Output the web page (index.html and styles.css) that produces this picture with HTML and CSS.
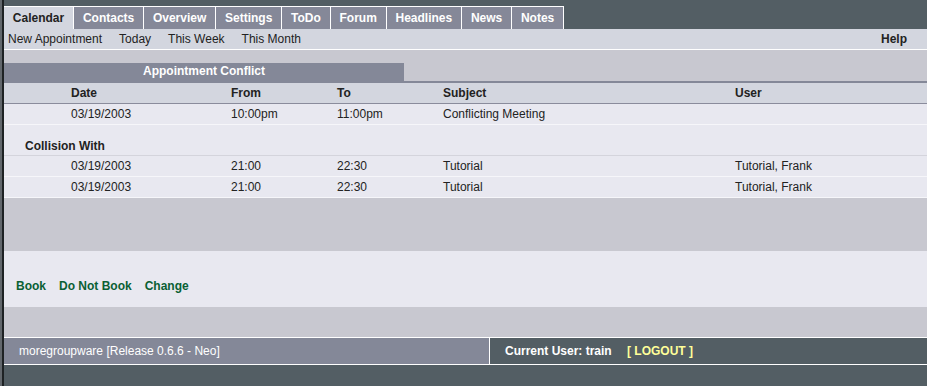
FILE: index.html
```html
<!DOCTYPE html>
<html lang="en">
<head>
  <meta charset="UTF-8" />
  <title>moregroupware - Calendar</title>
  <link rel="stylesheet" href="styles.css">
</head>
<body>
<div class="frame">
  <ul class="tabs">
    <li class="tab active">Calendar</li>
    <li class="tab">Contacts</li>
    <li class="tab">Overview</li>
    <li class="tab">Settings</li>
    <li class="tab">ToDo</li>
    <li class="tab">Forum</li>
    <li class="tab">Headlines</li>
    <li class="tab">News</li>
    <li class="tab">Notes</li>
  </ul>

  <div class="subnav">
    <div class="subnav-links">
      <a href="#">New Appointment</a>
      <a href="#">Today</a>
      <a href="#">This Week</a>
      <a href="#">This Month</a>
    </div>
    <a href="#" class="help">Help</a>
  </div>

  <div class="main">
    <div class="panel-head">
      <div class="panel-title">Appointment Conflict</div>
    </div>

    <div class="row head">
      <span></span><span>Date</span><span>From</span><span>To</span><span>Subject</span><span>User</span>
    </div>
    <div class="row">
      <span></span><span>03/19/2003</span><span>10:00pm</span><span>11:00pm</span><span>Conflicting Meeting</span><span></span>
    </div>

    <div class="collision">Collision With</div>
    <div class="row">
      <span></span><span>03/19/2003</span><span>21:00</span><span>22:30</span><span>Tutorial</span><span>Tutorial, Frank</span>
    </div>
    <div class="row">
      <span></span><span>03/19/2003</span><span>21:00</span><span>22:30</span><span>Tutorial</span><span>Tutorial, Frank</span>
    </div>

    <div class="gap-big"></div>
    <div class="actions">
      <a href="#">Book</a>
      <a href="#">Do Not Book</a>
      <a href="#">Change</a>
    </div>
    <div class="gap-small"></div>
  </div>

  <div class="footer">
    <div class="release">moregroupware [Release 0.6.6 - Neo]</div>
    <div class="user">Current User: train <a href="#" class="logout">[ LOGOUT ]</a></div>
  </div>
</div>
</body>
</html>
```

FILE: styles.css
```css
body {
  margin: 0;
  background: #535e64;
  font-family: "Liberation Sans", Arial, sans-serif;
  font-size: 12px;
  color: #222;
  border-left: 2px solid #62676c;
  min-height: 386px;
  box-sizing: border-box;
}
a {
  color: inherit;
  text-decoration: none;
}
.frame {
  border-left: 2px solid #1e2224;
  min-height: 386px;
}
.tabs {
  display: flex;
  list-style: none;
  margin: 0;
  padding: 6px 0 0 0;
}
.tab {
  height: 22px;
  line-height: 22px;
  padding: 0 8.85px;
  background: #858898;
  color: #fff;
  font-weight: bold;
  border-top: 1px solid #fff;
  border-right: 1px solid #fff;
}
.tab.active {
  background: #d3d6df;
  color: #222;
}
.subnav {
  display: flex;
  justify-content: space-between;
  height: 20px;
  line-height: 20px;
  background: #d3d6df;
  border-bottom: 1px solid #fff;
  padding: 0 20px 0 4px;
}
.subnav-links {
  display: flex;
  gap: 17px;
}
.help {
  font-weight: bold;
}
.main {
  background: #c8c8d0;
  padding-top: 13px;
}
.panel-head {
  border-bottom: 2px solid #848898;
}
.panel-title {
  width: 400px;
  height: 18px;
  line-height: 17px;
  background: #848898;
  color: #fff;
  font-weight: bold;
  text-align: center;
}
.row {
  display: grid;
  grid-template-columns: 67px 160px 106px 106px 292px 1fr;
  height: 20px;
  line-height: 20px;
  background: #e8e8f0;
  border-bottom: 1px solid #f6f6fa;
}
.row.head {
  background: #d3d6df;
  font-weight: bold;
  border-bottom: 1px solid #8a8c9c;
}
.collision {
  height: 16px;
  padding: 14px 0 0 21px;
  line-height: 14px;
  background: #e8e8f0;
  font-weight: bold;
  border-bottom: 1px solid #d4d4dc;
}
.gap-big {
  height: 53px;
}
.actions {
  display: flex;
  gap: 13px;
  height: 29px;
  padding: 27px 0 0 12px;
  line-height: 16px;
  background: #e8e8f0;
  font-weight: bold;
}
.actions a {
  color: #0a6034;
}
.gap-small {
  height: 30px;
}
.footer {
  display: flex;
  height: 26px;
  line-height: 26px;
  border-top: 1px solid #fff;
  border-bottom: 1px solid #fff;
}
.release {
  width: 470px;
  padding-left: 15px;
  background: #848898;
  color: #fff;
  border-right: 1px solid #fff;
}
.user {
  flex: 1;
  padding-left: 15px;
  color: #fff;
  font-weight: bold;
}
.logout {
  color: #ffff99;
  margin-left: 12px;
}
```
